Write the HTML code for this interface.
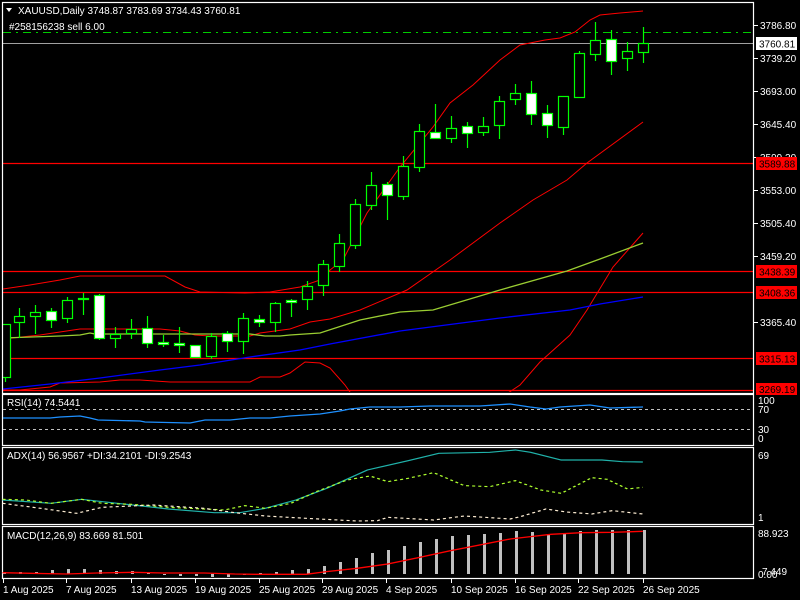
<!DOCTYPE html>
<html><head><meta charset="utf-8"><style>
html,body{margin:0;padding:0;background:#000;width:800px;height:600px;overflow:hidden}
svg{display:block}
text{font-family:"Liberation Sans",sans-serif;font-size:10px;fill:#fff}
</style></head><body>
<svg width="800" height="600" viewBox="0 0 800 600" xmlns="http://www.w3.org/2000/svg">
<rect width="800" height="600" fill="#000"/>
<defs><clipPath id="cm"><rect x="3" y="3" width="750" height="389"/></clipPath></defs>
<!-- main panel -->
<g clip-path="url(#cm)">
<g stroke="#ff0000" stroke-width="1.2">
<line x1="3" y1="163.5" x2="753" y2="163.5"/>
<line x1="3" y1="271.5" x2="753" y2="271.5"/>
<line x1="3" y1="292.5" x2="753" y2="292.5"/>
<line x1="3" y1="358.5" x2="753" y2="358.5"/>
<line x1="3" y1="390.5" x2="753" y2="390.5"/>
</g>
<line x1="3" y1="32.5" x2="753" y2="32.5" stroke="#00cc00" stroke-dasharray="8,5,2,5"/>
<line x1="3" y1="43.5" x2="753" y2="43.5" stroke="#a0a0a0"/>
<g fill="none" stroke="#ff0000" stroke-width="1">
<polyline points="3,289 30,285 60,280 80,276 165,276 185,287 200,292 245,293 270,292 300,287 320,280 330,270 343,260 367,213 400,167 433,127 450,103 473,85 500,60 520,45 545,40 560,38 575,32 590,20 600,15 620,13 643,11"/>
<polyline points="3,339 40,335 60,332 80,329 160,329 180,331 195,335 210,336 250,336 260,333 290,329 310,322 330,319 360,310 407,290 450,260 500,223 533,200 567,180 587,163 643,122"/>
<polyline points="3,390 20,390 50,387 60,383 100,382 120,380 140,380 170,382 250,382 260,377 280,377 290,373 305,362 320,363 330,368 345,385 352,395"/>
<polyline points="505,395 520,385 540,362 570,335 587,310 613,267 643,233"/>
</g>
<polyline fill="none" stroke="#9acd32" stroke-width="1.3" points="3,338 60,336 80,335 90,333 95,334 250,334 265,336 280,336 290,335 320,333 360,320 400,312 433,310 500,290 567,271 600,259 643,243"/>
<polyline fill="none" stroke="#0000ff" stroke-width="1.3" points="3,389 50,384 100,378 160,370 200,365 250,357 300,350 330,344 400,331 500,318 570,310 600,304 643,297"/>
<g stroke="#00ff00" stroke-width="1.2" id="candles"></g>
</g>
<!-- frames -->
<g fill="none" stroke="#fff" stroke-width="1.2">
<rect x="2.5" y="2.5" width="751" height="391"/>
<rect x="2.5" y="394.5" width="751" height="51"/>
<rect x="2.5" y="447.5" width="751" height="77"/>
<rect x="2.5" y="526.5" width="751" height="52"/>
</g>
<!-- price axis -->
<g stroke="#fff"><line x1="754" y1="25.5" x2="758" y2="25.5"/><line x1="754" y1="58.5" x2="758" y2="58.5"/><line x1="754" y1="91.5" x2="758" y2="91.5"/><line x1="754" y1="124.5" x2="758" y2="124.5"/><line x1="754" y1="157.5" x2="758" y2="157.5"/><line x1="754" y1="190.5" x2="758" y2="190.5"/><line x1="754" y1="223.5" x2="758" y2="223.5"/><line x1="754" y1="256.5" x2="758" y2="256.5"/><line x1="754" y1="322.5" x2="758" y2="322.5"/></g>
<g>
<text x="760" y="29">3786.80</text><text x="760" y="62">3739.20</text><text x="760" y="95">3693.00</text><text x="760" y="128">3645.40</text><text x="760" y="161">3599.20</text><text x="760" y="194">3553.00</text><text x="760" y="227">3505.40</text><text x="760" y="260">3459.20</text><text x="760" y="326">3365.40</text>
</g>
<rect x="756" y="37" width="41" height="13" fill="#fff"/><text x="759" y="47.5" style="fill:#000">3760.81</text>
<g fill="#ff0000"><rect x="756" y="157" width="41" height="13"/><rect x="756" y="265" width="41" height="13"/><rect x="756" y="286" width="41" height="13"/><rect x="756" y="352" width="41" height="13"/><rect x="756" y="383" width="41" height="12"/></g>
<g style="fill:#000"><text x="759" y="167.5" style="fill:#000">3589.88</text><text x="759" y="275.5" style="fill:#000">3438.39</text><text x="759" y="296.5" style="fill:#000">3408.36</text><text x="759" y="362.5" style="fill:#000">3315.13</text><text x="759" y="393" style="fill:#000">3269.19</text></g>
<path d="M6,8 L12,8 L9,12 Z" fill="#fff"/>
<text x="18" y="14">XAUUSD,Daily  3748.87 3783.69 3734.43 3760.81</text>
<text x="9" y="30">#258156238 sell 6.00</text>
<!-- RSI -->
<g stroke="#c0c0c0" stroke-dasharray="3,3"><line x1="3" y1="409.5" x2="753" y2="409.5"/><line x1="3" y1="429.5" x2="753" y2="429.5"/></g>
<polyline fill="none" stroke="#1e90ff" stroke-width="1.3" points="3,418 50,418 60,417 80,416 90,418 98,420 140,421 145,422 190,423 205,420 230,420 250,418 270,418 290,416 320,414 340,411 350,409 370,407 400,407 430,406 480,406 510,404 530,407 546,409 560,407 590,405 610,408 643,407"/>
<text x="7" y="406">RSI(14) 74.5441</text>
<text x="758" y="404">100</text><text x="758" y="413">70</text><text x="758" y="433">30</text><text x="758" y="442">0</text>
<!-- ADX -->
<g transform="translate(0,390) scale(0.5102,0.3333)" fill="none" vector-effect="non-scaling-stroke">
<polyline stroke="#20b2aa" stroke-width="3.5" points="5,330 100,340 160,328 230,340 330,357 420,368 470,368 520,355 580,330 640,295 720,240 800,212 860,190 960,187 1010,180 1040,187 1100,210 1180,210 1220,215 1260,216"/>
<polyline stroke="#adff2f" stroke-width="3.5" stroke-dasharray="6,6" points="5,328 50,330 100,340 160,328 200,340 260,343 330,352 400,357 440,360 480,347 520,355 570,340 620,305 680,270 725,258 760,275 800,265 850,248 910,287 960,290 1010,272 1060,300 1100,310 1160,263 1190,268 1230,297 1260,292"/>
<polyline stroke="#ffefd5" stroke-width="3.5" stroke-dasharray="6,6" points="5,340 80,355 150,370 200,352 300,345 400,355 460,368 520,378 600,385 700,393 740,392 760,382 850,390 910,378 1000,387 1020,380 1070,357 1110,366 1160,372 1200,362 1260,372"/>
</g>
<text x="7" y="459">ADX(14) 56.9567 +DI:34.2101 -DI:9.2543</text>
<text x="758" y="459">69</text><text x="758" y="521">1</text>
<!-- MACD -->
<g fill="#c0c0c0" id="hist"></g>
<g transform="translate(0,390) scale(0.5102,0.3333)"><polyline fill="none" stroke="#ff0000" stroke-width="4" points="5,548 60,550 130,552 190,549 260,547 320,549 400,549 460,552 500,553 600,553 640,545 700,535 760,522 820,503 880,483 940,465 1000,447 1040,440 1080,433 1140,428 1200,427 1260,424"/></g>
<text x="7" y="539">MACD(12,26,9) 83.669 81.501</text>
<text x="758" y="537">88.923</text><text x="762" y="575">7.449</text><text x="758" y="578">0.00</text>
<!-- x axis -->
<g stroke="#fff" id="xt"></g>
<g>
<text x="3" y="593">1 Aug 2025</text><text x="66" y="593">7 Aug 2025</text><text x="131" y="593">13 Aug 2025</text><text x="195" y="593">19 Aug 2025</text><text x="259" y="593">25 Aug 2025</text><text x="322" y="593">29 Aug 2025</text><text x="386" y="593">4 Sep 2025</text><text x="451" y="593">10 Sep 2025</text><text x="515" y="593">16 Sep 2025</text><text x="578" y="593">22 Sep 2025</text><text x="643" y="593">26 Sep 2025</text>
</g>
</svg>
<script>
var C=[[5,324,382,324,377,0],[19,308,338,316,322,0],[35,305,334,312,316,0],[51,308,328,311,320,1],[67,297,323,300,318,0],[83,293,315,298,299,0],[99,294,340,295,338,1],[115,327,348,334,338,0],[131,319,339,329,333,0],[147,316,348,328,343,1],[163,335,347,342,344,1],[179,327,353,343,345,1],[195,345,357,345,357,1],[211,333,359,336,356,0],[227,331,352,333,341,1],[243,313,354,318,341,0],[259,315,327,319,322,1],[275,302,332,303,322,0],[291,299,317,300,302,1],[307,281,310,286,299,0],[323,260,296,264,285,0],[339,234,272,243,266,0],[355,199,249,204,245,0],[371,172,210,185,205,0],[387,182,220,184,195,1],[403,156,200,166,196,0],[419,124,172,131,167,0],[435,104,138,132,138,1],[451,116,143,128,138,0],[467,122,148,126,133,1],[483,117,136,126,132,0],[499,96,139,101,125,0],[515,84,105,93,99,0],[531,81,125,93,114,1],[547,105,138,113,125,1],[563,96,135,96,127,0],[579,51,98,53,97,0],[595,22,61,40,54,0],[611,30,75,39,61,1],[627,42,71,51,58,0],[643,27,63,43,52,0]];
var ns="http://www.w3.org/2000/svg",g=document.getElementById("candles");
C.forEach(function(c){var l=document.createElementNS(ns,"line");l.setAttribute("x1",c[0]+.5);l.setAttribute("x2",c[0]+.5);l.setAttribute("y1",c[1]);l.setAttribute("y2",c[2]);g.appendChild(l);
var r=document.createElementNS(ns,"rect");r.setAttribute("x",c[0]-4.5);r.setAttribute("y",c[3]+.5);r.setAttribute("width",10);r.setAttribute("height",Math.max(1,c[4]-c[3]));r.setAttribute("fill",c[5]?"#fff":"#000");g.appendChild(r);});
var H=[572,572,572,570,569,569,570,571,571,573,575,576,576,577,577,575,573,572,570,569,566,562,558,553,550,546,542,539,536,535,534,533,531,532,534,534,531,530,530,530,530];
var h=document.getElementById("hist");
H.forEach(function(t,i){var x=4+16*i,r=document.createElementNS(ns,"rect");r.setAttribute("x",x-1);r.setAttribute("width",3);r.setAttribute("y",Math.min(t,574));r.setAttribute("height",Math.max(1,Math.abs(574-t)));h.appendChild(r);});
var xt=document.getElementById("xt");
[3,66,131,195,259,322,386,451,515,578,643].forEach(function(x){var l=document.createElementNS(ns,"line");l.setAttribute("x1",x+.5);l.setAttribute("x2",x+.5);l.setAttribute("y1",579);l.setAttribute("y2",583);xt.appendChild(l);});
</script>
</body></html>
